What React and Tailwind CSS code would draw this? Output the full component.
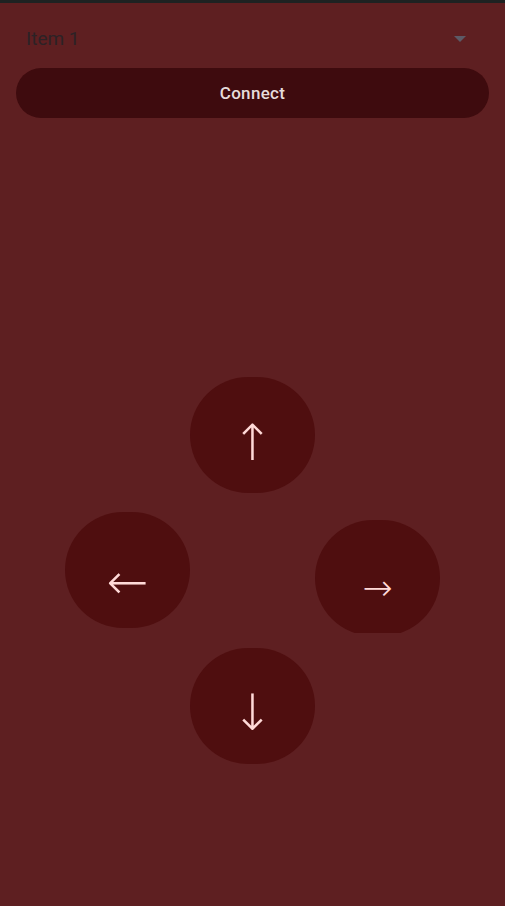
import React from "react";

function PadButton({ glyph, className = "", glyphClass = "" }) {
  return (
    <button
      className={`w-[125px] h-[116px] rounded-[58px] bg-[#4f0e0f] flex items-center justify-center text-[#ffdad8] shrink-0 ${className}`}
    >
      <span className={`leading-none font-light ${glyphClass}`} style={{ fontFamily: "Roboto, 'DejaVu Sans', sans-serif" }}>
        {glyph}
      </span>
    </button>
  );
}

export default function App() {
  return (
    <div className="min-h-[906px] w-full bg-[#5e1f21] flex flex-col" style={{ fontFamily: "Roboto, 'Noto Sans', sans-serif" }}>
      <div className="h-[3px] bg-[#1e2222]" />

      <div className="flex items-center justify-between pl-[26px] pr-[39px] h-[72px] -mb-[7px]">
        <span className="text-[19px] font-normal text-[#2c2226]">Item 1</span>
        <svg width="12" height="6" viewBox="0 0 12 6">
          <path d="M0 0h12L6 6z" fill="#5c5a66" />
        </svg>
      </div>

      <div className="px-4">
        <button className="w-full h-[50px] rounded-full bg-[#3e0b0e] text-[#e6dcdb] text-[17px] font-medium tracking-[0.3px] pt-[2px]">
          Connect
        </button>
      </div>

      <div className="flex flex-col items-center mt-[259px]">
        <PadButton glyph="↑" glyphClass="text-[50px] mt-[16px]" />
        <div className="flex w-[375px] h-[121px] mt-[19px] overflow-hidden">
          <PadButton glyph="←" glyphClass="text-[50px] mt-[24px]" />
          <div className="w-[125px] shrink-0" />
          <PadButton glyph="→" className="mt-2" glyphClass="text-[36px] mt-[20px]" />
        </div>
        <PadButton glyph="↓" className="mt-[15px]" glyphClass="text-[50px] mt-[14px]" />
      </div>
    </div>
  );
}
